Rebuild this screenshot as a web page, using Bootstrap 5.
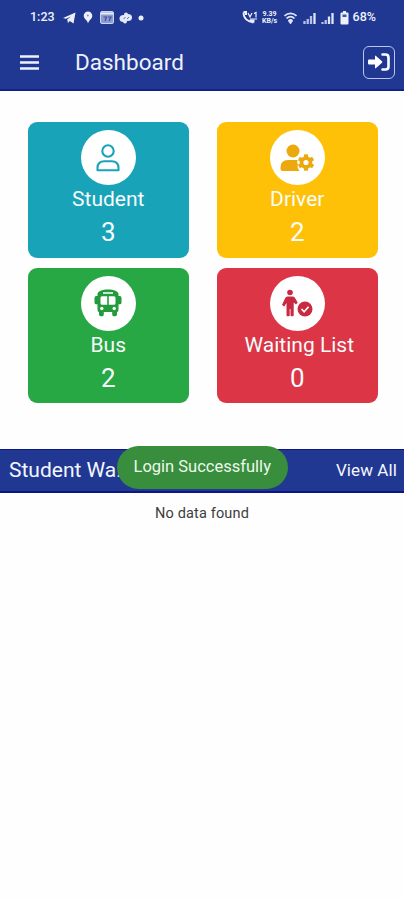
<!DOCTYPE html>
<html lang="en">
<head>
<meta charset="utf-8">
<meta name="viewport" content="width=device-width, initial-scale=1">
<title>Dashboard</title>
<link href="https://cdn.jsdelivr.net/npm/bootstrap@5.3.0/dist/css/bootstrap.min.css" rel="stylesheet">
<style>
body{font-family:Roboto,"Liberation Sans",sans-serif;background:#fefefe;height:900px;overflow:hidden}
svg{display:block;flex:none}
.topbar{background:#203892;height:91px;border-bottom:2px solid #12208a}
.status{height:35px;padding:0 28px 0 30px;font-size:12.5px;font-weight:500;color:#eef1fb}
.rate{font-size:7px;line-height:7px;width:16px;font-weight:700}
.appbar{height:54px;padding:0 9px 0 20px}
.title{font-size:22.5px;letter-spacing:0;margin-left:36px;line-height:28px;color:#eef1fb}
.exit{width:32px;height:33px;border:1.5px solid #b9c6ee;border-radius:6px}
.tiles{padding:31px 26px 0 27.5px;display:grid;grid-template-columns:161.5px 161.5px;column-gap:27.5px;row-gap:10px;height:357.500px;align-content:start}
.tile{height:135.5px;border-radius:9px;padding-top:8px;color:#f6fcfb;border:0}
.disc{width:55px;height:55px;background:#fff}
.label{font-size:21px;line-height:26px;margin-top:1px}
.num{font-size:26px;line-height:30px;margin-top:5px}
.teal{background:#18a3b9}.amber{background:#fec107}.green{background:#28a745}.red{background:#dc3546}
.section-bar{height:44.5px;background:#203892;border-top:1.5px solid #0d1784;border-bottom:2px solid #0d1784;padding:0 7px 0 9px;color:#f4f6fd}
.heading{font-size:21px}
.link{font-size:17px;letter-spacing:.1px}
.note{left:117px;top:-4px;width:170.5px;height:43.5px;border-radius:22px;background:#388e3c;color:#edf8ee;font-size:16.5px}
.empty{font-size:14.500px;letter-spacing:.16px;color:#3c3c3c;margin-top:10px;line-height:22px}
</style>
</head>
<body>
<header class="topbar">
  <div class="status d-flex align-items-center justify-content-between">
    <div class="d-flex align-items-center">
      <span>1:23</span>
      <svg class="ms-2" width="13" height="12" viewBox="0 0 13 12" fill="#eef1fb"><path d="M0 6 12.5.5 10.5 11.5 6.8 9 5 11 4.2 7.5 8 4.500 3 6.8z"/></svg>
      <svg style="margin-left:7px" width="10" height="13" viewBox="0 0 10 13"><path fill="#eef1fb" d="M5 .5a4.3 4.3 0 0 1 4.3 4.3C9.3 8 6.5 8.5 5 12.5 4.500 9 .7 8 .7 4.800A4.300 4.300 0 0 1 5 .5z"/><circle cx="4.800" cy="4.500" r="1" fill="#8493cc"/></svg>
      <svg style="margin-left:7px" width="14" height="13" viewBox="0 0 14 13"><rect x=".5" y=".5" width="13" height="12" rx="1.500" fill="#8b9bd0" stroke="#cbd4f0"/><path d="M1 2.500h12" stroke="#e8ecfa" stroke-width="2"/><path d="M3.500 6h3L5 10M8 6h3L9 10" fill="none" stroke="#3d50a0" stroke-width="1.200"/></svg>
      <svg style="margin-left:5px" width="14" height="12" viewBox="0 0 14 12" fill="#e4e9fa"><ellipse cx="4.500" cy="6.500" rx="4" ry="3.500"/><ellipse cx="9" cy="5.500" rx="4" ry="3.500"/><circle cx="7" cy="2.500" r="2"/><circle cx="6" cy="9.500" r="2"/><path d="m4.500 7 2-2M8 7l2-2" stroke="#6174b8"/></svg>
      <svg style="margin-left:5px" width="6" height="6"><circle cx="3" cy="3" r="2.500" fill="#eef1fb"/></svg>
    </div>
    <div class="d-flex align-items-center">
      <svg width="16" height="13" viewBox="0 0 16 13" fill="none" stroke="#eef1fb"><path d="M1.500 1.500C1.500 7 5.500 11 11.500 11.500" stroke-width="1.800"/><path d="M1.500 1h2.500v3M7.500 9.500h4v2" stroke-width="2"/><path d="m6 2 2 4 2-4M12 2.500l2-1v5M8 8h7" stroke-width="1.200"/></svg>
      <div class="rate text-center ms-1">9.39<br>KB/s</div>
      <svg style="margin-left:6px" width="13" height="12" viewBox="0 0 13 12" fill="none" stroke="#dfe5f8" stroke-width="1.700"><path d="M.5 4C4 .5 9 .5 12.500 4M2.500 6.500C5 4 8 4 10.500 6.500M4.500 9c1.500-1.500 2.500-1.500 4 0"/><path d="M5.500 9.500h2L6.500 11z" fill="#dfe5f8"/></svg>
      <svg style="margin-left:6px" width="13" height="12" viewBox="0 0 13 12"><path d="M1.500 12V9M4.700 12V7M8 12V4" stroke="#b5c1e8" stroke-width="2.300"/><path d="M11.500 12V1" stroke="#dfe5f8" stroke-width="2.300"/></svg>
      <svg style="margin-left:5px" width="13" height="12" viewBox="0 0 13 12"><path d="M1.500 12V10M4.700 12V8" stroke="#b5c1e8" stroke-width="2.300"/><path d="M8 12V4.500M11.500 12V1" stroke="#dfe5f8" stroke-width="2.300"/></svg>
      <svg style="margin-left:6px" width="9" height="14" viewBox="0 0 9 14"><path fill="#eef1fb" d="M3 0h3v1.500h1.500q1 0 1 1v10q0 1-1 1h-6q-1 0-1-1v-10q0-1 1-1H3z"/><path fill="#4154a5" d="M2.500 3.500h4V6h-4z"/></svg>
      <span style="margin-left:4px">68%</span>
    </div>
  </div>
  <div class="appbar d-flex align-items-center">
    <svg width="19" height="15" viewBox="0 0 19 15"><path d="M0 1.500h19M0 7.500h19M0 13.500h19" stroke="#eef1fb" stroke-width="2.400"/></svg>
    <h1 class="title fw-normal mb-0">Dashboard</h1>
    <div class="exit ms-auto d-flex align-items-center justify-content-center">
      <svg width="22" height="20" viewBox="0 0 22 20"><path d="M1 7.500h6V4.200q0-1.200 1-.3l6 5.300q.8.800 0 1.600l-6 5.300q-1 .9-1-.3v-3.300H1q-1 0-1-1v-3q0-1 1-1z" fill="#fff"/><path d="M14.500 2.500h3q3 0 3 3v9q0 3-3 3h-3" stroke="#fff" stroke-width="2.600" fill="none" stroke-linecap="round"/></svg>
    </div>
  </div>
</header>
<main>
  <section class="tiles">
    <div class="tile teal d-flex flex-column align-items-center">
      <div class="disc rounded-circle d-flex align-items-center justify-content-center">
        <svg width="24" height="28" viewBox="0 0 24 28" fill="none" stroke="#18a3b9" stroke-width="2.100"><circle cx="12" cy="7" r="5.700"/><path d="M1.500 26.300V24q0-6.700 7-6.700h7q7 0 7 6.700v2.300z" stroke-linejoin="round"/></svg>
      </div>
      <div class="label">Student</div><div class="num">3</div>
    </div>
    <div class="tile amber d-flex flex-column align-items-center">
      <div class="disc rounded-circle d-flex align-items-center justify-content-center">
        <svg width="34" height="28" viewBox="0 0 34 28"><g fill="#eca90d"><circle cx="13" cy="7" r="6.500"/><path d="M.5 25v-1.500Q.5 16 8 16h9.500q-.8 3 .5 4-1.300 4 1.800 7H2.500q-2 0-2-2z"/><g transform="translate(26 18.500)"><circle r="6.300"/><path d="M-2-8.200h4V8.200h-4z"/><path d="M-2-8.200h4V8.200h-4z" transform="rotate(60)"/><path d="M-2-8.200h4V8.200h-4z" transform="rotate(120)"/></g></g><circle cx="26" cy="18.500" r="2.600" fill="#fff"/></svg>
      </div>
      <div class="label">Driver</div><div class="num">2</div>
    </div>
    <div class="tile green d-flex flex-column align-items-center">
      <div class="disc rounded-circle d-flex align-items-center justify-content-center">
        <svg width="28" height="28" viewBox="0 0 28 28"><path fill="#229b3d" d="M14 .5c6 0 10.500 1.800 10.500 4.500v2h1.300q1.700 0 1.700 1.700v5q0 1.500-1.700 1.500h-1.300V21q0 1.800-1.500 2v2.500q0 1.700-1.600 1.700h-1.600q-1.600 0-1.600-1.700V23H9.800v2.500q0 1.700-1.600 1.700H6.600Q5 27.200 5 25.500V23q-1.500-.2-1.500-2v-5.800H2.200Q.5 15.200.5 13.700v-5Q.5 7 2.200 7h1.300V5C3.500 2.300 8 .5 14 .5z"/><path fill="#fff" d="M9 3.300h10v1.500H9zM8 7.300h5.200v8.500H8q-1.500 0-1.500-1.500V8.800Q6.500 7.300 8 7.300zM14.800 7.300H20q1.500 0 1.500 1.500v5.500q0 1.500-1.500 1.500h-5.200z"/><circle cx="7.800" cy="19.500" r="1.700" fill="#fff"/><circle cx="20.200" cy="19.500" r="1.700" fill="#fff"/></svg>
      </div>
      <div class="label">Bus</div><div class="num">2</div>
    </div>
    <div class="tile red d-flex flex-column align-items-center">
      <div class="disc rounded-circle d-flex align-items-center justify-content-center">
        <svg width="32" height="28" viewBox="0 0 32 28"><g fill="#c92a3f"><circle cx="9" cy="3.500" r="2.800"/><path d="M6.500 7.500h5q1.700 0 2.500 1.400l2.700 4.500-1.700 2.100-2.300-2v12.700q0 1-1.200 1h-1q-1 0-1-1V20H8.700v6.200q0 1-1 1h-1.200q-1 0-1-1V14l-2.300 3.500-2.200-1.500L4.200 9q.8-1.500 2.300-1.500z"/><circle cx="24" cy="20" r="7.500"/></g><path d="m20.500 20 2.600 2.700 4.500-5" fill="none" stroke="#fff" stroke-width="1.700"/></svg>
      </div>
      <div class="label ps-1">Waiting List</div><div class="num">0</div>
    </div>
  </section>
  <section>
    <div class="section-bar position-relative d-flex align-items-center justify-content-between">
      <span class="heading">Student Wa...</span>
      <span class="link">View All</span>
      <div class="note position-absolute d-flex align-items-center justify-content-center" role="status">Login Successfully</div>
    </div>
    <p class="empty text-center mb-0">No data found</p>
  </section>
</main>
<script src="https://cdn.jsdelivr.net/npm/bootstrap@5.3.0/dist/js/bootstrap.bundle.min.js"></script>
</body>
</html>
